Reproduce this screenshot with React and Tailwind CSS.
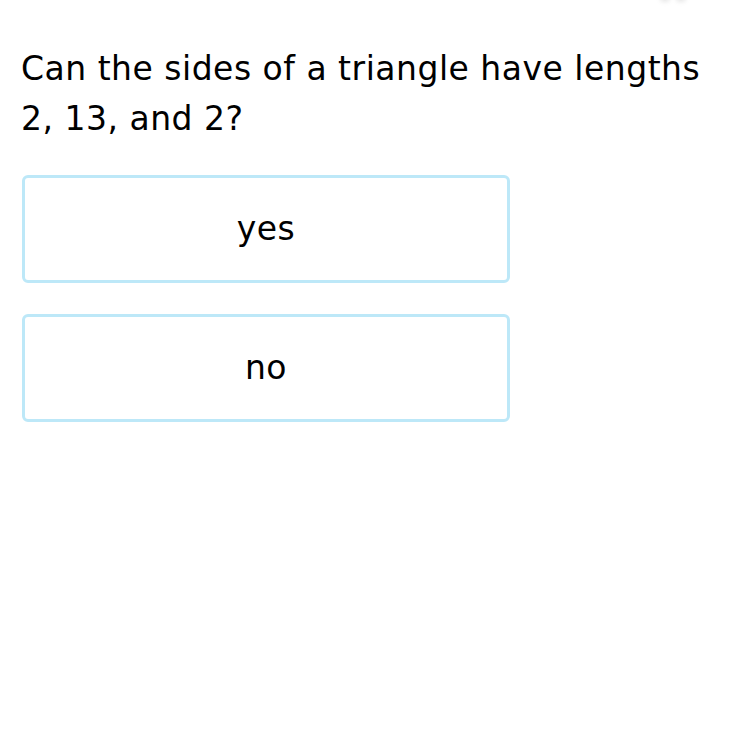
export default function App() {
  return (
    <div className="w-[750px] h-[750px] bg-white relative overflow-hidden" style={{ fontFamily: '"DejaVu Sans", Verdana, sans-serif' }}>
      <div className="absolute left-[660px] top-[-6px] flex gap-[6px]">
        <span className="w-[10px] h-[8px] rounded-full bg-[#e8e8e8] blur-[2px]"></span>
        <span className="w-[10px] h-[8px] rounded-full bg-[#e8e8e8] blur-[2px]"></span>
      </div>
      <div className="pt-[44px] pl-[21px] pr-[20px]">
        <p className="text-[33px] leading-[50px] tracking-[0.5px] text-black whitespace-nowrap">
          Can the sides of a triangle have lengths
          <br />
          2, 13, and 2?
        </p>
        <div className="mt-[31px] flex flex-col gap-[31px] pl-[1px]">
          <div className="w-[488px] h-[108px] border-[3px] border-[#bde8f8] rounded-[6px] flex items-center justify-center text-[33px] tracking-[0.5px] text-black">
            yes
          </div>
          <div className="w-[488px] h-[108px] border-[3px] border-[#bde8f8] rounded-[6px] flex items-center justify-center text-[33px] tracking-[0.5px] text-black">
            no
          </div>
        </div>
      </div>
    </div>
  );
}
